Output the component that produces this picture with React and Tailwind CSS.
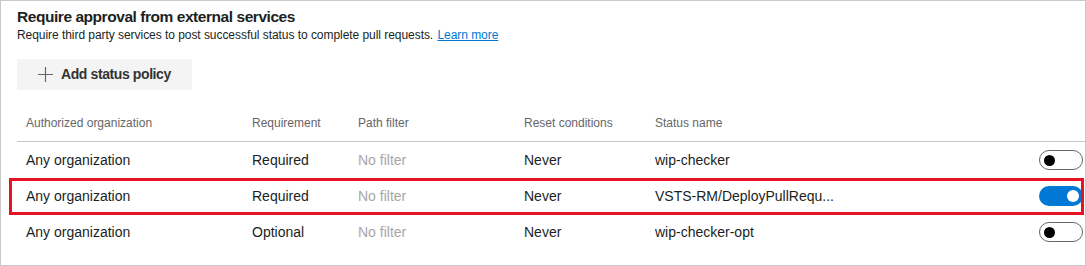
import React from 'react';

const rows = [
    { org: 'Any organization', req: 'Required', path: 'No filter', reset: 'Never', name: 'wip-checker', on: false },
    { org: 'Any organization', req: 'Required', path: 'No filter', reset: 'Never', name: 'VSTS-RM/DeployPullRequ...', on: true },
    { org: 'Any organization', req: 'Optional', path: 'No filter', reset: 'Never', name: 'wip-checker-opt', on: false },
];

const Toggle = ({ on }) =>
    on ? (
        <div className="w-[44px] h-[20px] rounded-full bg-[#0078d4] flex items-center justify-end pr-[4px]">
            <div className="w-[12px] h-[12px] rounded-full bg-white" />
        </div>
    ) : (
        <div className="w-[44px] h-[20px] rounded-full border border-[#666666] bg-white flex items-center pl-[4px]">
            <div className="w-[11px] h-[11px] rounded-full bg-black" />
        </div>
    );

const App = () => {
    return (
        <div
            className="relative w-[1086px] h-[266px] bg-white border border-[#c8c8c8] overflow-hidden text-[#201f1e]"
            style={{ fontFamily: '"Liberation Sans", Arial, sans-serif' }}
        >
            <div className="pl-[16px] pt-[6px]">
                <h2 className="text-[15.5px] leading-[20px] font-bold tracking-[-0.45px]">
                    Require approval from external services
                </h2>
                <p className="text-[12px] leading-[16px] tracking-[-0.05px]">
                    Require third party services to post successful status to complete pull requests.{' '}
                    <a href="#!" className="ml-[1px] text-[#0078d4] underline">Learn more</a>
                </p>
            </div>

            <div className="pl-[16px] mt-[16px]">
                <button className="w-[175px] h-[31px] bg-[#f4f4f4] flex items-center pl-[21px] gap-[8px] text-[14px] font-bold tracking-[-0.4px] text-[#333333]">
                    <svg width="15" height="15" viewBox="0 0 15 15" stroke="#666666" strokeWidth="1.2">
                        <path d="M7.5 0 V15 M0 7.5 H15" />
                    </svg>
                    Add status policy
                </button>
            </div>

            <div className="ml-[16px] mt-[21px]">
                <div className="flex items-center h-[31px] pb-[7px] border-b border-[#c8c8c8] text-[12px] text-[#666666] pl-[9px]">
                    <div className="w-[226px]">Authorized organization</div>
                    <div className="w-[106px]">Requirement</div>
                    <div className="w-[166px]">Path filter</div>
                    <div className="w-[131px]">Reset conditions</div>
                    <div>Status name</div>
                </div>
                {rows.map((r, i) => (
                    <div key={i} className="flex items-center h-[36px] text-[14px] pl-[9px]">
                        <div className="w-[226px]">{r.org}</div>
                        <div className="w-[106px]">{r.req}</div>
                        <div className="w-[166px] text-[#a6a6a6]">{r.path}</div>
                        <div className="w-[131px]">{r.reset}</div>
                        <div className="flex-1">{r.name}</div>
                        <div className="mr-[2px]">
                            <Toggle on={r.on} />
                        </div>
                    </div>
                ))}
            </div>

            <div className="absolute left-[8px] top-[177px] w-[1075px] h-[37px] border-[3px] border-[#e81123] pointer-events-none" />
        </div>
    );
};

export default App;
